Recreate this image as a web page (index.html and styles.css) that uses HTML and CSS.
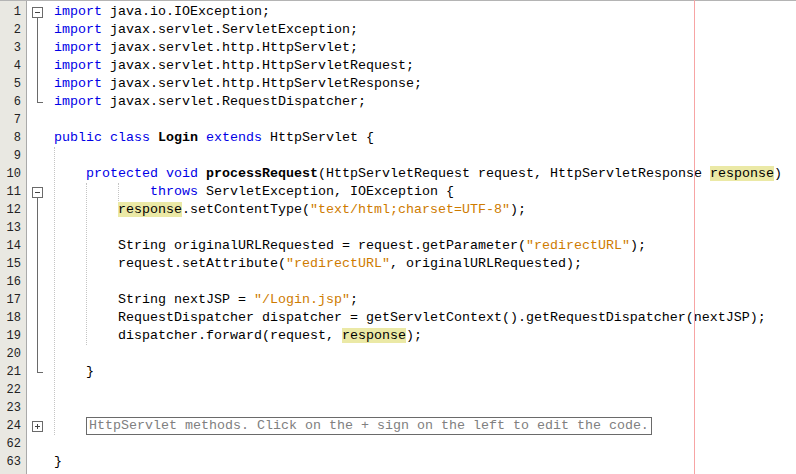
FILE: index.html
```html
<!DOCTYPE html>
<html lang="en">
<head>
    <meta charset="UTF-8">
    <title>Login.java</title>
    <link rel="stylesheet" href="styles.css">
</head>
<body>
    <div class="editor">
        <div class="gutter">
            <div>1</div><div>2</div><div>3</div><div>4</div><div>5</div><div>6</div>
            <div>7</div><div>8</div><div>9</div><div>10</div><div>11</div><div>12</div>
            <div>13</div><div>14</div><div>15</div><div>16</div><div>17</div><div>18</div>
            <div>19</div><div>20</div><div>21</div><div>22</div><div>23</div><div>24</div>
            <div>62</div><div>63</div>
        </div>

        <div class="folds">
            <div class="fold open"><span class="box"></span></div>
            <div class="fold line"></div>
            <div class="fold line"></div>
            <div class="fold line"></div>
            <div class="fold line"></div>
            <div class="fold end"></div>
            <div class="fold"></div>
            <div class="fold"></div>
            <div class="fold"></div>
            <div class="fold"></div>
            <div class="fold open"><span class="box"></span></div>
            <div class="fold line"></div>
            <div class="fold line"></div>
            <div class="fold line"></div>
            <div class="fold line"></div>
            <div class="fold line"></div>
            <div class="fold line"></div>
            <div class="fold line"></div>
            <div class="fold line"></div>
            <div class="fold line"></div>
            <div class="fold end"></div>
            <div class="fold"></div>
            <div class="fold"></div>
            <div class="fold closed"><span class="box"></span></div>
            <div class="fold"></div>
            <div class="fold"></div>
        </div>

        <div class="code">
            <!-- indent guides -->
            <div class="guide g-col0"></div>
            <div class="guide g-col4"></div>
            <div class="guide g-col8"></div>

            <div class="ln"><span class="kw">import</span> java.io.IOException;</div>
            <div class="ln"><span class="kw">import</span> javax.servlet.ServletException;</div>
            <div class="ln"><span class="kw">import</span> javax.servlet.http.HttpServlet;</div>
            <div class="ln"><span class="kw">import</span> javax.servlet.http.HttpServletRequest;</div>
            <div class="ln"><span class="kw">import</span> javax.servlet.http.HttpServletResponse;</div>
            <div class="ln"><span class="kw">import</span> javax.servlet.RequestDispatcher;</div>
            <div class="ln"></div>
            <div class="ln"><span class="kw">public class</span> <b>Login</b> <span class="kw">extends</span> HttpServlet {</div>
            <div class="ln"></div>
            <div class="ln">    <span class="kw">protected void</span> <b>processRequest</b>(HttpServletRequest request, HttpServletResponse <span class="hl">response</span>)</div>
            <div class="ln">            <span class="kw">throws</span> ServletException, IOException {</div>
            <div class="ln">        <span class="hl">response</span>.setContentType(<span class="str">"text/html;charset=UTF-8"</span>);</div>
            <div class="ln"></div>
            <div class="ln">        String originalURLRequested = request.getParameter(<span class="str">"redirectURL"</span>);</div>
            <div class="ln">        request.setAttribute(<span class="str">"redirectURL"</span>, originalURLRequested);</div>
            <div class="ln"></div>
            <div class="ln">        String nextJSP = <span class="str">"/Login.jsp"</span>;</div>
            <div class="ln">        RequestDispatcher dispatcher = getServletContext().getRequestDispatcher(nextJSP);</div>
            <div class="ln">        dispatcher.forward(request, <span class="hl">response</span>);</div>
            <div class="ln"></div>
            <div class="ln">    }</div>
            <div class="ln"></div>
            <div class="ln"></div>
            <div class="ln">    <span class="collapsed">HttpServlet methods. Click on the + sign on the left to edit the code.</span></div>
            <div class="ln"></div>
            <div class="ln">}</div>

            <div class="margin-line"></div>
        </div>
    </div>
</body>
</html>
```

FILE: styles.css
```css
* {
    margin: 0;
    padding: 0;
    box-sizing: border-box;
}

body {
    background: #ffffff;
    color: #000000;
    overflow: hidden;
}

.editor {
    display: flex;
    height: 474px;
    border-top: 1px solid #b4b4b4;
    background: #ffffff;
}

/* Line numbers */
.gutter {
    width: 27px;
    padding-top: 2px;
    padding-right: 5px;
    background: #e9e8e2;
    border-right: 1px solid #a9a9a9;
    font-family: 'Liberation Mono', monospace;
    font-size: 12px;
    color: #222222;
    text-align: right;
}

.gutter div {
    height: 18px;
    line-height: 18px;
}

/* Fold markers */
.folds {
    width: 27px;
    padding-top: 2px;
}

.fold {
    height: 18px;
    padding: 4px 0 0 5px;
}

.fold.line {
    background: linear-gradient(#6a6a6a, #6a6a6a) no-repeat 10px 0 / 1px 100%;
}

.fold.end {
    background:
        linear-gradient(#6a6a6a, #6a6a6a) no-repeat 10px 0 / 1px 10px,
        linear-gradient(#6a6a6a, #6a6a6a) no-repeat 10px 9px / 6px 1px;
}

.fold.open {
    background: linear-gradient(#6a6a6a, #6a6a6a) no-repeat 10px 15px / 1px 3px;
}

.fold .box {
    display: block;
    position: relative;
    width: 11px;
    height: 11px;
    border: 1px solid #6a6a6a;
    background: #ffffff;
}

.fold .box::after {
    content: "";
    position: absolute;
    left: 2px;
    top: 4px;
    width: 5px;
    height: 1px;
    background: #444444;
}

.fold.closed .box::before {
    content: "";
    position: absolute;
    left: 4px;
    top: 2px;
    width: 1px;
    height: 5px;
    background: #444444;
}

/* Source text */
.code {
    position: relative;
    flex: 1;
    padding-top: 2px;
    font-family: 'Liberation Mono', 'Courier New', monospace;
    font-size: 13.333px;
}

.ln {
    height: 18px;
    line-height: 18px;
    white-space: pre;
}

.kw {
    color: #0000e6;
}

.str {
    color: #ce7b00;
}

.hl {
    background: #ebe9a6;
}

.code b {
    font-weight: bold;
}

.collapsed {
    display: inline-block;
    height: 18px;
    line-height: 16px;
    padding: 0 2px;
    border: 1px solid #6a6a6a;
    color: #808080;
    vertical-align: top;
}

.guide {
    position: absolute;
    width: 0;
    border-left: 1px dotted #c4c4c4;
}

.g-col0 {
    left: 0;
    top: 146px;
    height: 288px;
}

.g-col4 {
    left: 32px;
    top: 182px;
    height: 162px;
}

.g-col8 {
    left: 64px;
    top: 182px;
    height: 18px;
}

/* Right margin at column 80 */
.margin-line {
    position: absolute;
    left: 640px;
    top: -1px;
    width: 1px;
    height: 474px;
    background: #f7a4a4;
}
```
